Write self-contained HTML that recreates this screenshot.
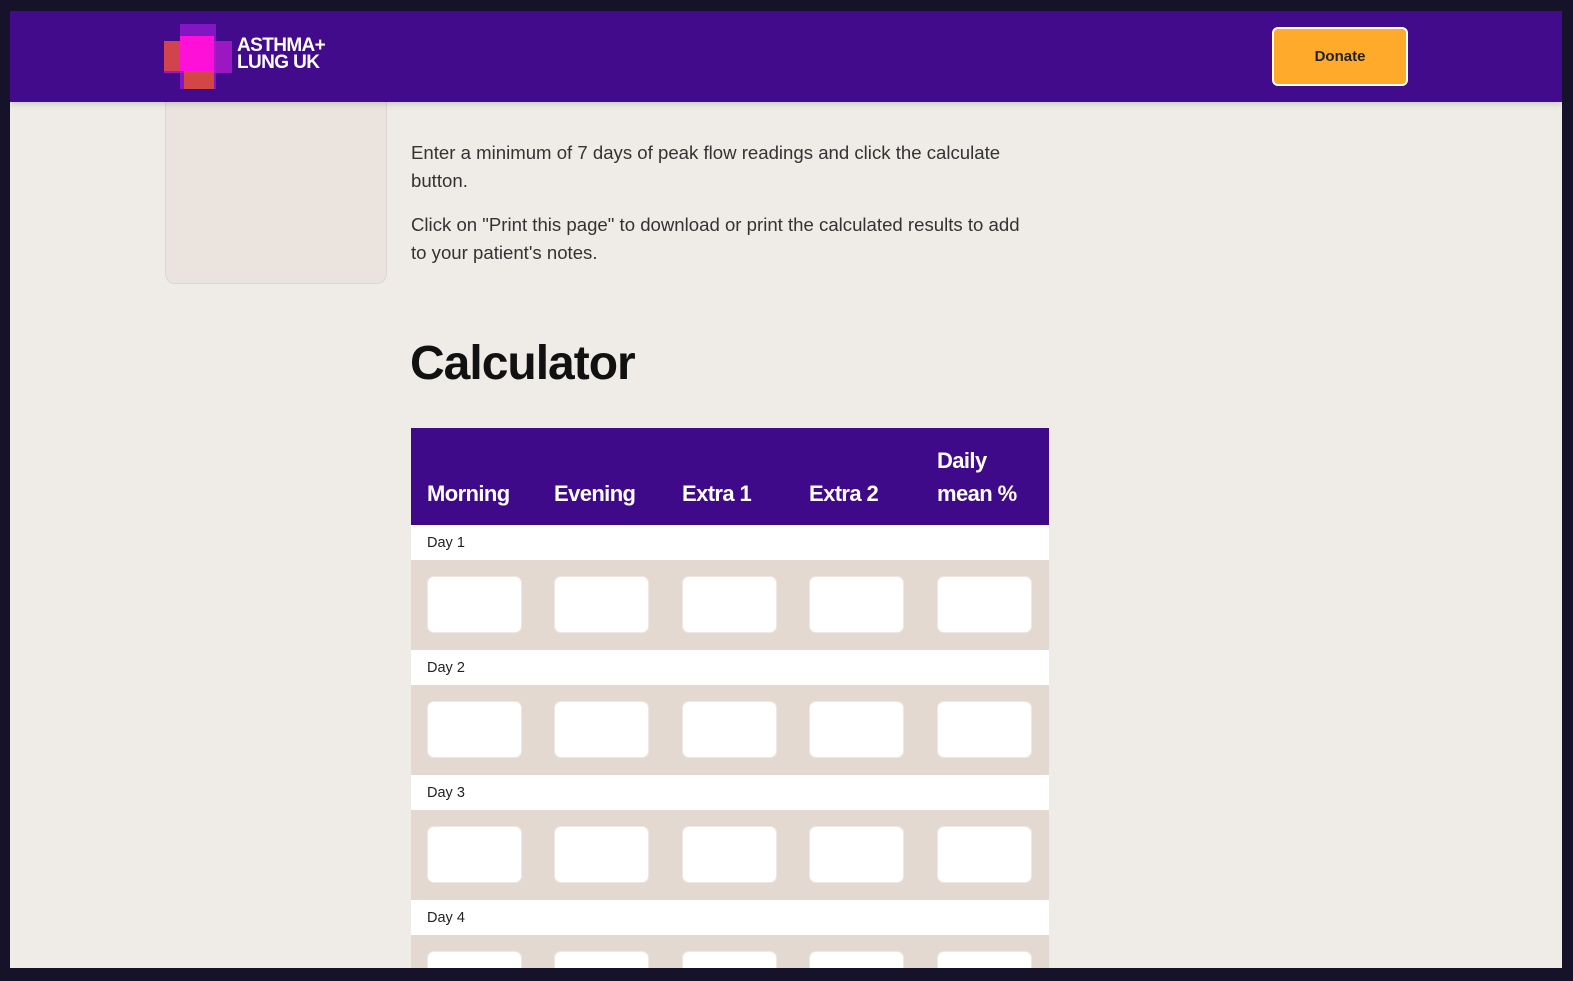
<!DOCTYPE html>
<html><head><style>
*{margin:0;padding:0;box-sizing:border-box}
body{width:1573px;height:981px;background:#16122a;font-family:"Liberation Sans",sans-serif;overflow:hidden;position:relative}
.page{position:absolute;left:10px;top:11px;width:1552px;height:957px;background:#efebe6;overflow:hidden}
.hdr{position:absolute;left:0;top:0;width:1552px;height:91px;background:#420b8c;box-shadow:0 2px 6px rgba(0,0,0,.15);z-index:2}
.donate{position:absolute;left:1262px;top:16px;width:136px;height:59px;background:#ffaa2a;border:2px solid #fff;border-radius:6px;font-weight:bold;font-size:15px;color:#222;text-align:center;line-height:55px}
.logo{position:absolute;left:227px;top:26px;color:#fff;font-weight:bold;font-size:19px;line-height:17px;letter-spacing:-.6px}
.side{position:absolute;left:155px;top:60px;width:222px;height:213px;background:#ebe3de;border:1px solid #e0d6d0;border-radius:10px}
p{position:absolute;left:401px;width:628px;font-size:18.6px;line-height:28px;color:#333}
h1{position:absolute;left:400px;top:325px;font-size:48px;color:#111;letter-spacing:-1px}
.tbl{position:absolute;left:401px;top:417px;width:638px}
.th{height:97px;background:#3e0a8a;position:relative;color:#fff;font-weight:bold;font-size:22px}
.th span{position:absolute;bottom:15px;line-height:33px;letter-spacing:-.6px}
.lab{height:35px;background:#fff;font-size:14.5px;color:#222;padding:10px 0 0 16px}
.inp{height:90px;background:#e3d9d1;position:relative}
.inp i{position:absolute;top:16px;width:95px;height:57px;background:#fff;border:1px solid #efe7e1;border-radius:7px}
</style></head><body>
<div class="page">
<div class="hdr">
<svg style="position:absolute;left:154px;top:13px" width="68" height="65">
<rect x="16" y="0" width="36" height="65" fill="#8a17c8" opacity=".9"/>
<rect x="0" y="17" width="68" height="32" fill="#b01ad0" opacity=".8"/>
<rect x="0" y="17" width="20" height="30" fill="#e05030" opacity=".8"/>
<rect x="20" y="45" width="30" height="20" fill="#e05030" opacity=".85"/>
<rect x="16" y="12" width="34" height="35" fill="#ff10d8"/>
</svg>
<div class="logo">ASTHMA+<br>LUNG UK</div>
<div class="donate">Donate</div>
</div>
<div class="side"></div>
<p style="top:128px">Enter a minimum of 7 days of peak flow readings and click the calculate button.</p>
<p style="top:200px">Click on "Print this page" to download or print the calculated results to add to your patient's notes.</p>
<h1>Calculator</h1>
<div class="tbl">
<div class="th"><span style="left:16px">Morning</span><span style="left:143px">Evening</span><span style="left:271px">Extra 1</span><span style="left:398px">Extra 2</span><span style="left:526px">Daily<br>mean %</span></div>
<div class="lab">Day 1</div><div class="inp"><i style="left:16px"></i><i style="left:143px"></i><i style="left:271px"></i><i style="left:398px"></i><i style="left:526px"></i></div>
<div class="lab">Day 2</div><div class="inp"><i style="left:16px"></i><i style="left:143px"></i><i style="left:271px"></i><i style="left:398px"></i><i style="left:526px"></i></div>
<div class="lab">Day 3</div><div class="inp"><i style="left:16px"></i><i style="left:143px"></i><i style="left:271px"></i><i style="left:398px"></i><i style="left:526px"></i></div>
<div class="lab">Day 4</div><div class="inp"><i style="left:16px"></i><i style="left:143px"></i><i style="left:271px"></i><i style="left:398px"></i><i style="left:526px"></i></div>
</div>
</div>
</body></html>
